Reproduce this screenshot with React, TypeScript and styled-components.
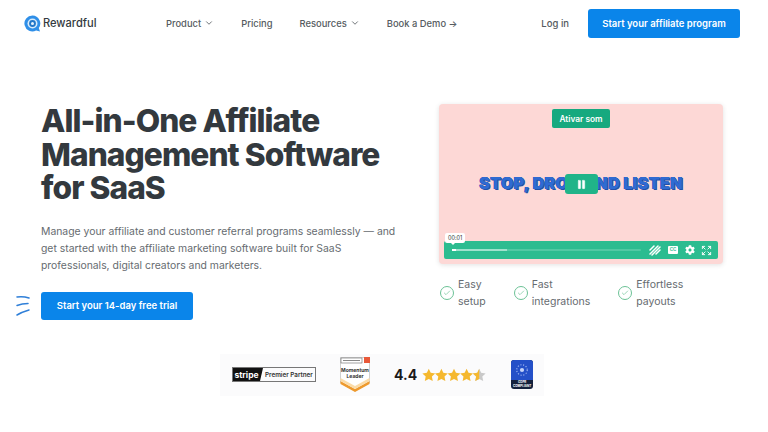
import React from 'react';
import styled, { createGlobalStyle } from 'styled-components';
import { ChevronDown, Pause, Expand, Check } from 'lucide-react';
import { FaCog } from 'react-icons/fa';

const GlobalStyle = createGlobalStyle`
  html, body {
    margin: 0;
    padding: 0;
    background: #fff;
    font-family: Inter, "Open Sans", sans-serif;
    overflow: hidden;
  }
`;

const Page = styled.div`
  width: 768px;
  height: 432px;
  overflow: hidden;
`;

const Header = styled.header`
  height: 46px;
  display: flex;
  align-items: center;
  padding: 0 28px 0 24px;
`;

const Logo = styled.div`
  width: 142px;
  display: flex;
  align-items: center;
  gap: 2px;
  font-size: 11.1px;
  color: #333a40;
  font-weight: 500;
`;

const Nav = styled.nav`
  display: flex;
  align-items: center;
  gap: 27px;
  flex: 1;
`;

const NavLink = styled.span`
  display: flex;
  align-items: center;
  gap: 3px;
  font-size: 9.4px;
  font-weight: 500;
  color: #555b60;
`;

const LogIn = styled.span`
  font-size: 9.5px;
  font-weight: 500;
  color: #555b60;
  margin-right: 19px;
`;

const BlueButton = styled.a<{ $w: number; $h: number }>`
  width: ${(p) => p.$w}px;
  height: ${(p) => p.$h}px;
  display: flex;
  align-items: center;
  justify-content: center;
  border-radius: 3px;
  background: #0a85ea;
  color: #fff;
  font-size: 9.5px;
  font-weight: 600;
`;

const Hero = styled.section`
  display: flex;
  justify-content: space-between;
  padding: 58px 45px 0 41px;
`;

const Left = styled.div`
  width: 360px;
`;

const Title = styled.h1`
  margin: 0;
  font-size: 31.7px;
  line-height: 33.5px;
  font-weight: 800;
  letter-spacing: -0.95px;
  color: #33393e;
  white-space: nowrap;
`;

const Lead = styled.p`
  margin: 18px 0 18px;
  font-size: 10.4px;
  line-height: 17px;
  color: #666b70;
  white-space: nowrap;
`;

const CtaRow = styled.div`
  position: relative;
`;

const Sparks = styled.svg`
  position: absolute;
  left: -26px;
  top: 3px;
`;

const Right = styled.div`
  width: 284px;
`;

const Video = styled.div`
  position: relative;
  height: 160px;
  box-sizing: border-box;
  padding-bottom: 3px;
  background: #fdd8d6;
  border-radius: 4px;
  box-shadow: 0 1px 5px rgba(0, 0, 0, 0.12);
  display: flex;
  align-items: center;
  justify-content: center;
`;

const Caption = styled.div`
  font-size: 16px;
  font-weight: 900;
  color: #2f6bd2;
  letter-spacing: 0.3px;
  text-shadow: 1px 1px 0 #2250a8, -0.5px 0 0 #2250a8, 0 -0.5px 0 #2250a8;
  white-space: nowrap;
`;

const SoundButton = styled.div`
  position: absolute;
  top: 5px;
  left: 113px;
  width: 58px;
  height: 19px;
  background: #16a97f;
  color: #fff;
  border-radius: 2px;
  font-size: 8.3px;
  font-weight: 600;
  display: flex;
  align-items: center;
  justify-content: center;
`;

const PauseButton = styled.div`
  position: absolute;
  left: 126px;
  top: 70px;
  width: 33px;
  height: 20px;
  border-radius: 3px;
  background: #20b489;
  color: #fff;
  display: flex;
  align-items: center;
  justify-content: center;
`;

const Controls = styled.div`
  position: absolute;
  left: 5px;
  right: 5px;
  bottom: 5px;
  height: 18px;
  border-radius: 2px;
  background: #2cbc90;
  display: flex;
  align-items: center;
  gap: 6px;
  padding: 0 6px 0 8px;
  color: #fff;
`;

const Track = styled.div`
  flex: 1;
  height: 2px;
  margin-right: 2px;
  background: rgba(255, 255, 255, 0.18);
  border-radius: 1px;
`;

const TrackFill = styled.div`
  position: relative;
  width: 29%;
  height: 100%;
  background: rgba(255, 255, 255, 0.45);

  &::before {
    content: '';
    position: absolute;
    left: 0;
    top: 0;
    width: 4px;
    height: 2px;
    background: #fff;
  }
`;

const TimeTip = styled.div`
  position: absolute;
  left: 6px;
  bottom: 21px;
  height: 10px;
  padding: 0 3px;
  background: #fff;
  border-radius: 2px;
  font-size: 5.5px;
  line-height: 10px;
  color: #333;

  &::after {
    content: '';
    position: absolute;
    left: 6px;
    top: 10px;
    border: 2px solid transparent;
    border-top-color: #fff;
  }
`;

const CcBox = styled.span`
  width: 10px;
  height: 8px;
  margin: 0 1px;
  background: #fff;
  border-radius: 1px;
  color: #2cbc90;
  font-size: 4.5px;
  font-weight: 700;
  line-height: 8px;
  text-align: center;
`;

const Benefits = styled.ul`
  list-style: none;
  margin: 12px 0 0;
  padding: 0 0 0 1px;
  display: flex;
  gap: 28px;
`;

const Benefit = styled.li`
  display: flex;
  align-items: center;
  gap: 4px;
  font-size: 10.5px;
  line-height: 17px;
  color: #666b70;
`;

const CheckCircle = styled.span`
  width: 12px;
  height: 12px;
  border: 1px solid #6cc296;
  border-radius: 50%;
  color: #6cc296;
  display: flex;
  align-items: center;
  justify-content: center;
`;

const BadgeStrip = styled.div`
  width: 324px;
  height: 42px;
  margin: 34px 0 0 220px;
  padding: 0 0 0 12px;
  box-sizing: border-box;
  background: #fbfbfc;
  display: flex;
  align-items: center;
`;

const StripeBadge = styled.div`
  display: flex;
  align-items: center;
  height: 15px;
  width: 84px;
  border: 1px solid #777;
  box-sizing: border-box;
  font-size: 6.3px;
  font-weight: 600;
  color: #333;
  white-space: nowrap;
`;

const StripeMark = styled.span`
  height: 100%;
  width: 30px;
  padding-right: 3px;
  box-sizing: border-box;
  background: #111;
  color: #fff;
  font-size: 8.5px;
  font-weight: 700;
  display: flex;
  align-items: center;
  justify-content: center;
  margin-right: 2px;
  clip-path: polygon(0 0, 100% 0, 90% 100%, 0 100%);
`;

const ShieldWrap = styled.div`
  position: relative;
  width: 30px;
  height: 35px;
  margin-left: 24px;
`;

const ShieldText = styled.div`
  position: absolute;
  left: 0;
  right: 0;
  top: 11px;
  text-align: center;
  font-size: 5px;
  line-height: 5.5px;
  font-weight: 700;
  color: #333;
`;

const Score = styled.span`
  margin-left: 24px;
  font-size: 14px;
  font-weight: 700;
  color: #1a1a1a;
`;

const Stars = styled.svg`
  margin-left: 5px;
`;

const Gdpr = styled.div`
  width: 22px;
  height: 29px;
  margin-left: 25px;
  border-radius: 3px;
  background: #14213d;
  overflow: hidden;
  color: #fff;
  font-size: 3px;
  font-weight: 700;
  line-height: 3.5px;
  text-align: center;
`;

const GdprTop = styled.div`
  height: 20px;
  background: #2450c8;
  display: flex;
  align-items: center;
  justify-content: center;
  margin-bottom: 1px;
`;

const star = 'M7 0.5l2 4.3 4.6.6-3.4 3.2.9 4.6L7 11l-4.1 2.2.9-4.6L.4 5.4 5 4.8z';

export default function App() {
  return (
    <Page>
      <GlobalStyle />
      <Header>
        <Logo>
          <svg width="17" height="17" viewBox="0 0 17 17">
            <path d="M8.5 0.5a8 8 0 1 0 3.6 15.1L16 16.5l-1.2-3.4A8 8 0 0 0 8.5 0.5z" fill="#2f8fe8" />
            <circle cx="8.5" cy="8.5" r="5" fill="#d9ecfb" />
            <circle cx="8.5" cy="8.5" r="3.4" fill="#2277c9" />
            <circle cx="8.5" cy="8.5" r="1.5" fill="#e8f3fc" />
          </svg>
          Rewardful
        </Logo>
        <Nav>
          <NavLink>Product <ChevronDown size={10} /></NavLink>
          <NavLink>Pricing</NavLink>
          <NavLink>Resources <ChevronDown size={10} /></NavLink>
          <NavLink>Book a Demo →</NavLink>
        </Nav>
        <LogIn>Log in</LogIn>
        <BlueButton $w={152} $h={29}>Start your affiliate program</BlueButton>
      </Header>
      <Hero>
        <Left>
          <Title>All-in-One Affiliate<br />Management Software<br />for SaaS</Title>
          <Lead>
            Manage your affiliate and customer referral programs seamlessly — and<br />
            get started with the affiliate marketing software built for SaaS<br />
            professionals, digital creators and marketers.
          </Lead>
          <CtaRow>
            <Sparks width="18" height="22" viewBox="0 0 18 22" fill="none" stroke="#2f7fd8" strokeWidth="1.5" strokeLinecap="round">
              <path d="M2 2 Q8 1 14 3" />
              <path d="M2 10.5 Q7 8.5 13 8.5" />
              <path d="M2 20 Q7 17 14 15" />
            </Sparks>
            <BlueButton $w={152} $h={28}>Start your 14-day free trial</BlueButton>
          </CtaRow>
        </Left>
        <Right>
          <Video>
            <Caption>STOP, DROP AND LISTEN</Caption>
            <SoundButton>Ativar som</SoundButton>
            <PauseButton><Pause size={11} fill="#fff" strokeWidth={1} /></PauseButton>
            <Controls>
              <Track><TrackFill /></Track>
              <svg width="12" height="12" viewBox="0 0 12 12" stroke="#fff" strokeWidth="1.5" strokeLinecap="round">
                <path d="M1 6l4-4M1 10l8-8M3 11l8-8M7 10l4-4" />
              </svg>
              <CcBox>CC</CcBox>
              <FaCog size={10} color="#fff" />
              <Expand size={11} />
            </Controls>
            <TimeTip>00:01</TimeTip>
          </Video>
          <Benefits>
            <Benefit><CheckCircle><Check size={8} /></CheckCircle><span>Easy<br />setup</span></Benefit>
            <Benefit><CheckCircle><Check size={8} /></CheckCircle><span>Fast<br />integrations</span></Benefit>
            <Benefit><CheckCircle><Check size={8} /></CheckCircle><span>Effortless<br />payouts</span></Benefit>
          </Benefits>
        </Right>
      </Hero>
      <BadgeStrip>
        <StripeBadge><StripeMark>stripe</StripeMark>Premier Partner</StripeBadge>
        <ShieldWrap>
          <svg width="30" height="35" viewBox="0 0 30 35">
            <path d="M.5.5H29.5V26L15 34 .5 26z" fill="#fff" stroke="#bbb" strokeWidth="0.7" />
            <path d="M.5 24L15 32 29.5 24V27L15 35 .5 27z" fill="#ee9a2e" />
            <path d="M.5 21L15 29 29.5 21V24L15 32 .5 24z" fill="#fbdca8" />
            <rect x="1" y="1" width="21" height="5" fill="#fff" stroke="#666" strokeWidth="0.6" />
            <rect x="3" y="3" width="17" height="1" fill="#888" />
            <rect x="24" y="0" width="6" height="6" fill="#e8593a" />
          </svg>
          <ShieldText>Momentum<br />Leader</ShieldText>
        </ShieldWrap>
        <Score>4.4</Score>
        <Stars width="64" height="14" viewBox="0 0 66 14">
          <path d={star} fill="#f5b82e" />
          <path d={star} fill="#f5b82e" transform="translate(13 0)" />
          <path d={star} fill="#f5b82e" transform="translate(26 0)" />
          <path d={star} fill="#f5b82e" transform="translate(39 0)" />
          <path d={star} fill="#c9c9c9" transform="translate(52 0)" />
          <path d="M52.4 5.4L57 4.8 59 .5V11L54.9 13.2l.9-4.6z" fill="#f5b82e" />
        </Stars>
        <Gdpr>
          <GdprTop>
            <svg width="14" height="14" viewBox="0 0 12 12">
              <circle cx="6" cy="6" r="4.5" fill="none" stroke="#9db4f0" strokeWidth="1" strokeDasharray="1 1.4" />
              <circle cx="6" cy="6" r="1.8" fill="#c5d3f7" />
            </svg>
          </GdprTop>
          GDPR<br />COMPLIANT
        </Gdpr>
      </BadgeStrip>
    </Page>
  );
}
